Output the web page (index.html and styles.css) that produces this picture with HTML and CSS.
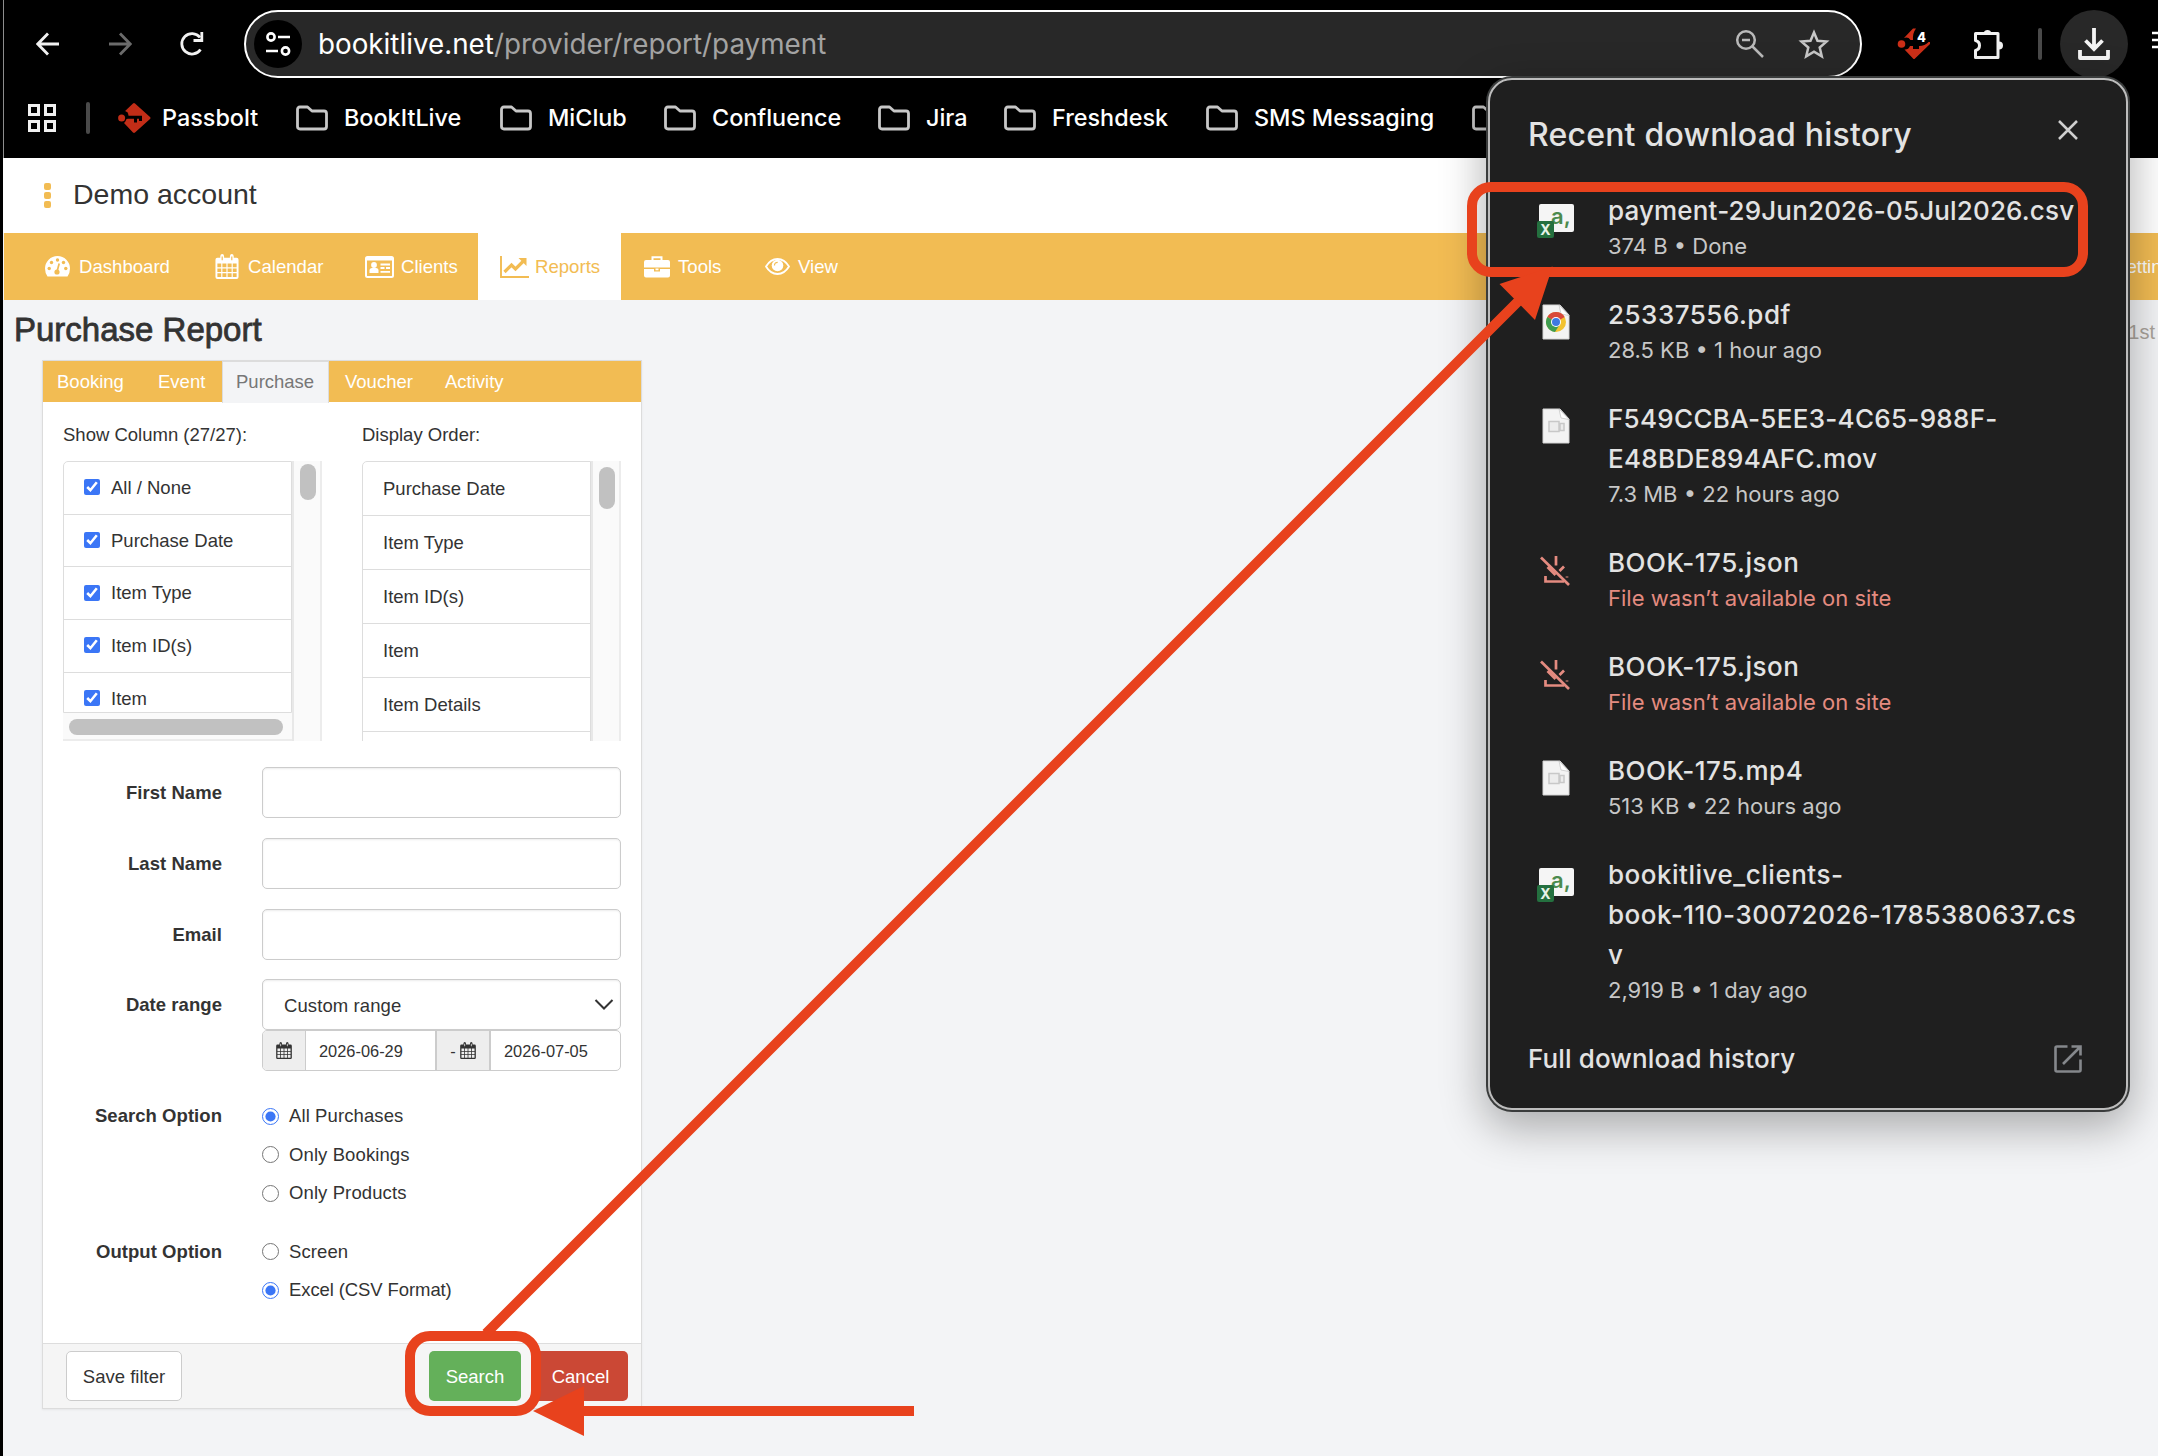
FILE: index.html
```html
<!DOCTYPE html>
<html lang="en">
<head>
<meta charset="utf-8">
<title>Purchase Report</title>
<link rel="stylesheet" href="styles.css">
</head>
<body>
<svg class="defs" width="0" height="0">
  <symbol id="folder" viewBox="0 0 32 26"><path d="M1.500 4.500Q1.500 2 4 2H11.500L16 6H28Q30.500 6 30.500 8.500V21.500Q30.500 24 28 24H4Q1.500 24 1.500 21.500Z" fill="none" stroke="#c7c7c7" stroke-width="2.800" stroke-linejoin="round"/></symbol>
  <symbol id="cal" viewBox="0 0 24 26"><path fill="currentColor" fill-rule="evenodd" d="M2 4H5V2.500Q5 0 7 0T9 2.500V4H15V2.500Q15 0 17 0T19 2.500V4H22Q24 4 24 6V24Q24 26 22 26H2Q0 26 0 24V6Q0 4 2 4ZM2 10V13.700H6V10ZM7.200 10V13.700H11.400V10ZM12.600 10V13.700H16.800V10ZM18 10V13.700H22V10ZM2 15V18.800H6V15ZM7.200 15V18.800H11.400V15ZM12.600 15V18.800H16.800V15ZM18 15V18.800H22V15ZM2 20V24H6V20ZM7.200 20V24H11.400V20ZM12.600 20V24H16.800V20ZM18 20V24H22V20ZM6.400 2.500V6.500H7.600V2.500ZM16.400 2.500V6.500H17.600V2.500Z"/></symbol>
  <symbol id="page" viewBox="0 0 28 36"><path d="M1 1H18L27 11V35H1Z" fill="#f3f3f3" stroke="#d5d5d5"/><path d="M17 1L27 11.500L19 10Z" fill="#fff" stroke="#c6c6c6" stroke-width=".8"/></symbol>
  <symbol id="movie" viewBox="0 0 28 36"><use href="#page"/><path d="M7 13.500h10v10H7zM18 15.500h4v7h-4z" fill="#ececec" stroke="#c8c8c8" stroke-width="1.500"/></symbol>
  <symbol id="nodl" viewBox="0 0 30 30"><path d="M1 1.500L29 29" stroke="#e48b80" stroke-width="2.700"/><path d="M16 0V9.500M7.500 11L15.500 19M24 10.500L19.500 15M5.500 20V25.500H24M27 20.500V21.500" fill="none" stroke="#e48b80" stroke-width="2.700"/></symbol>
</svg>

<div class="window">
  <header class="chrome">
    <div class="toolbar">
      <svg class="back" width="24" height="24" viewBox="0 0 24 24"><path d="M23 12H2M12 1.500L1.800 12L12 22.500" fill="none" stroke="#f1f1f1" stroke-width="2.800"/></svg>
      <svg class="fwd" width="24" height="24" viewBox="0 0 24 24"><path d="M1 12H22M12 1.500L22.200 12L12 22.500" fill="none" stroke="#6b6b6b" stroke-width="2.800"/></svg>
      <svg class="reload" width="26" height="26" viewBox="0 0 26 26"><path d="M21.500 18.500A10.200 10.200 0 1 1 21 6.500" fill="none" stroke="#f1f1f1" stroke-width="2.800"/><path d="M22.800 1V9.500H14.500" fill="none" stroke="#f1f1f1" stroke-width="2.800"/></svg>
      <div class="omnibox">
        <span class="site"><svg width="26" height="26" viewBox="0 0 26 26" fill="none" stroke="#fff" stroke-width="2.600"><circle cx="6" cy="6" r="3.600"/><path d="M13 6H25M1 20H13"/><circle cx="20.500" cy="20" r="3.600"/></svg></span>
        <span class="url"><b>bookitlive.net</b>/provider/report/payment</span>
        <svg class="mag" width="30" height="30" viewBox="0 0 30 30" fill="none" stroke="#b9b9b9" stroke-width="2.500"><circle cx="11" cy="11" r="8.800"/><path d="M17.500 17.500L28 28M7 11H15"/></svg>
        <svg class="star" width="32" height="31" viewBox="0 0 32 31"><path d="M16 3.500L19.500 11.800L28.500 12.600L21.700 18.500L23.800 27.300L16 22.600L8.200 27.300L10.300 18.500L3.500 12.600L12.500 11.800Z" fill="none" stroke="#c7c7c7" stroke-width="2.500"/></svg>
      </div>
      <svg class="ext" width="34" height="32" viewBox="0 0 34 32"><path d="M16 0.500H19Q15.500 5 16 12H13.500A5.500 5.500 0 0 0 7 10ZM7.500 21.500A5.500 5.500 0 0 0 13 18H16V21H22V18Q28 18 31.500 14H33V16L17.500 31H16.500Z" fill="#cc2f18"/><circle cx="4.500" cy="16" r="3.800" fill="#cc2f18"/><text x="20" y="13.500" font-family="Inter, sans-serif" font-size="13" font-weight="800" fill="#fff">4</text></svg>
      <svg class="puzzle" width="34" height="34" viewBox="0 0 34 34"><path d="M4.500 6.500H27V30.500H4.500V23.500Q8.500 22.500 8.500 18.500T4.500 13.500Z" fill="none" stroke="#f1f1f1" stroke-width="3" stroke-linejoin="round"/><path d="M12.500 6A4.200 4.200 0 0 1 20.500 6ZM28 14.500A4 4 0 0 1 28 22.500Z" fill="#f1f1f1"/></svg>
      <i class="sep"></i>
      <span class="dl"><svg width="34" height="34" viewBox="0 0 34 34" fill="none" stroke="#f4f4f4" stroke-width="3.800"><path d="M17 1V22M8.500 13.500L17 22L25.500 13.500"/><path d="M3 23V31H31V23" stroke-linejoin="round"/></svg></span>
      <svg class="more" width="10" height="20" viewBox="0 0 10 20"><path d="M0 3H10M0 10H10M0 17H10" stroke="#fff" stroke-width="2.500"/></svg>
    </div>
    <div class="bookmarks">
      <svg class="grid" width="28" height="28" viewBox="0 0 28 28" fill="none" stroke="#f1f1f1" stroke-width="3"><path d="M1.500 1.500h9v9h-9zM17.500 1.500h9v9h-9zM1.500 17.500h9v9h-9zM17.500 17.500h9v9h-9z"/></svg>
      <i class="sep"></i>
      <span class="bm pass"><svg width="33" height="30" viewBox="0 0 33 30"><path d="M15 .5Q16 -.3 17 .5L32 14Q33 15 32 16L17 29.500Q16 30.300 15 29.500L6 20A6 6 0 0 0 5 10Z" fill="#c22d17"/><circle cx="6" cy="12.500" r="4.500" fill="#000"/><circle cx="3.600" cy="15" r="3.500" fill="#c22d17"/><path d="M8 14.300H22.500V18M17.500 14V19.500" stroke="#000" stroke-width="3" fill="none"/></svg><span class="w0">Passbolt</span></span>
      <span class="bm"><svg><use href="#folder"/></svg><span class="w1">BookItLive</span></span>
      <span class="bm"><svg><use href="#folder"/></svg><span class="w2">MiClub</span></span>
      <span class="bm"><svg><use href="#folder"/></svg><span class="w3">Confluence</span></span>
      <span class="bm"><svg><use href="#folder"/></svg><span class="w4">Jira</span></span>
      <span class="bm"><svg><use href="#folder"/></svg><span class="w5">Freshdesk</span></span>
      <span class="bm"><svg><use href="#folder"/></svg><span class="w6">SMS Messaging</span></span>
      <span class="bm"><svg><use href="#folder"/></svg></span>
    </div>
  </header>

  <div class="account"><span class="dots"><i></i><i></i><i></i></span><span class="name">Demo account</span></div>

  <nav class="nav">
    <a class="n1"><svg width="25" height="21" viewBox="0 0 25 21"><path fill="#fff" d="M12.500 0A12.500 12.500 0 0 1 25 12.500Q25 17 22.500 20.500H2.500Q0 17 0 12.500A12.500 12.500 0 0 1 12.500 0Z"/><g fill="#f2bc53"><circle cx="4.200" cy="12.500" r="1.700"/><circle cx="6.500" cy="6.500" r="1.700"/><circle cx="12.500" cy="4" r="1.700"/><circle cx="18.500" cy="6.500" r="1.700"/><circle cx="20.800" cy="12.500" r="1.700"/><circle cx="12" cy="16" r="2.600"/></g><path d="M12.200 15L14.200 7.500" stroke="#f2bc53" stroke-width="1.700"/></svg>Dashboard</a>
    <a class="n2"><svg width="24" height="25"><use href="#cal"/></svg>Calendar</a>
    <a class="n3"><svg width="29" height="22" viewBox="0 0 29 22"><rect x="1" y="1" width="27" height="20" rx="1.500" fill="none" stroke="#fff" stroke-width="2"/><path d="M1 3H28" stroke="#fff" stroke-width="3"/><circle cx="9" cy="9" r="2.900" fill="#fff"/><path d="M4.500 17V14.500Q4.500 12 7 12H11Q13.500 12 13.500 14.500V17Z" fill="#fff"/><path d="M15.500 8.500H25M15.500 12H19.500M21 12H25M15.500 15.800H25" stroke="#fff" stroke-width="1.800"/></svg>Clients</a>
    <a class="n4 on"><svg width="29" height="22" viewBox="0 0 29 22"><path d="M1 0V21H29" fill="none" stroke="#f2bc53" stroke-width="1.900"/><path d="M4.500 16L11.500 9L15.500 13L23.500 5" fill="none" stroke="#f2bc53" stroke-width="3.200"/><path d="M18.500 2H26.500V10Z" fill="#f2bc53"/></svg>Reports</a>
    <a class="n5"><svg width="26" height="22" viewBox="0 0 26 22"><path d="M8.500 4V1.200H17.500V4" fill="none" stroke="#fff" stroke-width="2"/><path d="M2 4H24Q26 4 26 6V11.500H0V6Q0 4 2 4ZM0 13H10V15.500H16V13H26V19.500Q26 21.500 24 21.500H2Q0 21.500 0 19.500ZM11.500 12.500H14.500V14.300H11.500Z" fill="#fff"/></svg>Tools</a>
    <a class="n6"><svg width="25" height="17" viewBox="0 0 25 17"><path d="M1 8.500Q5.500 1 12.500 1T24 8.500Q19.500 16 12.500 16T1 8.500Z" fill="none" stroke="#fff" stroke-width="1.800"/><circle cx="12.500" cy="7.500" r="5.800" fill="#fff"/><path d="M9.500 7.500Q9.500 4.300 12.700 4.300" fill="none" stroke="#f2bc53" stroke-width="1.200"/></svg>View</a>
    <a class="settings">Settings</a>
  </nav>

  <main>
    <div class="headline"><h1>Purchase Report</h1><span class="date">1st</span></div>
    <section class="panel">
      <div class="tabs"><a class="t1">Booking</a><a class="t2">Event</a><a class="t3 on">Purchase</a><a class="t4">Voucher</a><a class="t5">Activity</a></div>
      <div class="body">
        <div class="cols">
          <div class="col">
            <div class="cap">Show Column (27/27):</div>
            <div class="scroller two">
              <div class="list checks">
                <label><input type="checkbox" checked>All / None</label>
                <label><input type="checkbox" checked>Purchase Date</label>
                <label><input type="checkbox" checked>Item Type</label>
                <label><input type="checkbox" checked>Item ID(s)</label>
                <label><input type="checkbox" checked>Item</label>
              </div>
              <div class="vtrack"><i></i></div>
              <div class="htrack"><i></i></div>
            </div>
          </div>
          <div class="col">
            <div class="cap">Display Order:</div>
            <div class="scroller">
              <div class="list order"><div>Purchase Date</div><div>Item Type</div><div>Item ID(s)</div><div>Item</div><div>Item Details</div><div></div></div>
              <div class="vtrack"><i></i></div>
            </div>
          </div>
        </div>
        <div class="row"><b>First Name</b><span class="field"></span></div>
        <div class="row"><b>Last Name</b><span class="field"></span></div>
        <div class="row"><b>Email</b><span class="field"></span></div>
        <div class="row range"><b>Date range</b>
          <div class="stack">
            <span class="field select">Custom range<svg width="20" height="11" viewBox="0 0 20 11"><path d="M1.500 1L10 9.500L18.500 1" fill="none" stroke="#333" stroke-width="2"/></svg></span>
            <div class="dates"><span class="add a1"><svg width="16" height="17"><use href="#cal"/></svg></span><span class="d1">2026-06-29</span><span class="add a2">-<svg width="16" height="17"><use href="#cal"/></svg></span><span class="d2">2026-07-05</span></div>
          </div>
        </div>
        <div class="opts"><b>Search Option</b><div><label><input type="radio" name="s" checked>All Purchases</label><label><input type="radio" name="s">Only Bookings</label><label><input type="radio" name="s">Only Products</label></div></div>
        <div class="opts second"><b>Output Option</b><div><label><input type="radio" name="o">Screen</label><label class="fmt"><input type="radio" name="o" checked>Excel (CSV Format)</label></div></div>
      </div>
      <footer><button class="save">Save filter</button><button class="search">Search</button><button class="cancel">Cancel</button></footer>
    </section>
  </main>
</div>

<aside class="popup">
  <div class="phead"><h2>Recent download history</h2><svg width="20" height="20" viewBox="0 0 20 20"><path d="M1 1L19 19M19 1L1 19" stroke="#cfcfcf" stroke-width="2.500"/></svg></div>
  <div class="item"><span class="csv"><i class="sheet">a,</i><i class="xl">X</i></span><div><p class="s1">payment-29Jun2026-05Jul2026.csv</p><small>374 B • Done</small></div></div>
  <div class="item"><svg class="p" viewBox="0 0 28 36"><use href="#page"/><circle cx="14" cy="18" r="10" fill="#f2c230"/><path d="M14 18L5.300 13A10 10 0 0 1 22.700 13Z" fill="#d9493a"/><path d="M14 18L5.300 13A10 10 0 0 0 13 28L18 20Z" fill="#3f9c50"/><circle cx="14" cy="18" r="5" fill="#fff"/><circle cx="14" cy="18" r="4" fill="#3f78e0"/></svg><div><p>25337556.pdf</p><small>28.5 KB • 1 hour ago</small></div></div>
  <div class="item"><svg class="p"><use href="#movie"/></svg><div><p class="s2">F549CCBA-5EE3-4C65-988F-<br>E48BDE894AFC.mov</p><small>7.3 MB • 22 hours ago</small></div></div>
  <div class="item"><svg class="x"><use href="#nodl"/></svg><div><p>BOOK-175.json</p><small class="err">File wasn’t available on site</small></div></div>
  <div class="item"><svg class="x"><use href="#nodl"/></svg><div><p>BOOK-175.json</p><small class="err">File wasn’t available on site</small></div></div>
  <div class="item"><svg class="p"><use href="#movie"/></svg><div><p>BOOK-175.mp4</p><small>513 KB • 22 hours ago</small></div></div>
  <div class="item"><span class="csv"><i class="sheet">a,</i><i class="xl">X</i></span><div><p>bookitlive_clients-<br>book-110-30072026-1785380637.cs<br>v</p><small>2,919 B • 1 day ago</small></div></div>
  <div class="pfoot"><span>Full download history</span><svg width="28" height="28" viewBox="0 0 28 28" fill="none" stroke="#85888c" stroke-width="2.600"><path d="M13.500 1.500H3Q1.500 1.500 1.500 3V25Q1.500 26.500 3 26.500H25Q26.500 26.500 26.500 25V14.500M17.500 1.500H26.500V10.500M26 2L9 19"/></svg></div>
</aside>

<svg class="marks" width="2158" height="1456" viewBox="0 0 2158 1456">
  <g fill="none" stroke="#e8421d" stroke-width="10">
    <rect x="1472" y="187" width="611" height="85" rx="19"/>
    <rect x="410" y="1336" width="126" height="75" rx="20"/>
    <path d="M486 1333.500L1520 299.500M580 1411H914"/>
  </g>
  <path d="M1499.500 284L1535 320L1552.600 266.500ZM584 1386V1436L533 1411Z" fill="#e8421d"/>
</svg>
</body>
</html>
```
FILE: styles.css
```css
* { box-sizing: border-box; }
body { margin: 0; width: 2158px; height: 1456px; overflow: hidden; position: relative; background: #f3f4f6; font-family: "Liberation Sans", Arial, sans-serif; font-size: 18.5px; color: #333; }
svg { display: block; flex: none; }
i { display: block; flex: none; font-style: normal; }
.defs { position: absolute; }
.window { height: 1456px; border-left: 3px solid #000; display: flex; flex-direction: column; overflow: hidden; }

.chrome { height: 158px; background: #000; border-left: 1px solid #8d8d8d; font-family: Inter, sans-serif; flex: none; }
.toolbar { height: 88px; display: flex; align-items: center; padding-left: 32px; }
.fwd { margin-left: 48px; }
.reload { margin-left: 47px; }
.omnibox { width: 1618px; height: 68px; margin-left: 39px; border: 2px solid #fff; border-radius: 34px; background: #282828; display: flex; align-items: center; padding-left: 8px; flex: none; }
.site { width: 48px; height: 48px; border-radius: 50%; background: #000; display: grid; place-items: center; }
.url { margin-left: 16px; font-size: 27.8px; color: #a3a3a3; width: 1417px; white-space: nowrap; }
.url b { font-weight: 400; color: #fff; }
.star { margin-left: 33px; }
.ext { margin-left: 35px; }
.puzzle { margin-left: 40px; }
.sep { width: 4px; height: 32px; border-radius: 2px; background: #4a4a4a; }
.toolbar .sep { margin-left: 33px; }
.dl { width: 68px; height: 68px; margin-left: 18px; border-radius: 50%; background: #282828; display: grid; place-items: center; flex: none; }
.more { margin-left: 24px; margin-top: -8px; }
.bookmarks { height: 60px; display: flex; align-items: center; padding-left: 24px; font-size: 23.4px; font-weight: 500; color: #fff; white-space: nowrap; }
.bookmarks .sep { margin-left: 30px; margin-right: 28px; }
.bm { display: flex; align-items: center; gap: 16px; margin-right: 38px; flex: none; }
.bm svg { width: 32px; height: 26px; }
.bm.pass svg { width: 33px; height: 30px; }
.bm.pass { gap: 11px; }
.bm span { position: relative; top: -1px; }
.w0 { width: 96px; } .w1 { width: 118px; } .w2 { width: 78px; } .w3 { width: 128px; } .w4 { width: 40px; } .w5 { width: 116px; } .w6 { width: 180px; }

.account { height: 75px; flex: none; background: #fff; display: flex; align-items: center; padding-left: 41px; font-size: 28.5px; }
.name { padding-bottom: 2px; }
.dots { display: grid; gap: 2px; margin-right: 22px; }
.dots i { width: 7px; height: 7px; border-radius: 2px; background: #f2bc53; }

.nav { height: 67px; flex: none; background: #f2bc53; display: flex; color: #fff; font-size: 18.6px; margin-left: 1px; }
.nav a { display: flex; align-items: center; gap: 9px; flex: none; height: 67px; }
.n1 { width: 170px; margin-left: 41px; } .n2 { width: 150px; } .n3 { width: 113px; }
.nav .n3 { gap: 7px; }
.nav .on { width: 143px; background: #fff; color: #f2bc53; padding-left: 22px; gap: 6px; }
.n5 { width: 121px; margin-left: 23px; }
.n6 { width: 80px; }
.nav .n5, .nav .n6 { gap: 8px; }
.nav .settings { margin-left: 1269px; }

main { flex: 1; }
.headline { height: 60px; display: flex; justify-content: space-between; padding: 12px 3px 0 11px; }
h1 { margin: 0; font-size: 33px; line-height: 36px; font-weight: 400; -webkit-text-stroke: .8px #333; }
.date { font-size: 20px; color: #a9a39b; margin-top: 9px; }
.panel { width: 600px; margin-left: 39px; background: #fff; border: 1px solid #dcdcdc; box-shadow: 0 1px 2px rgba(0,0,0,.06); }
.tabs { height: 41px; background: #f2bc53; display: flex; color: #fff; line-height: 42px; }
.tabs a { flex: none; }
.t1 { width: 101px; padding-left: 14px; } .t2 { width: 78px; padding-left: 14px; }
.tabs .on { width: 107px; height: 42px; padding-left: 13px; background: #f3f4f6; border: 1px solid #dcdcdc; border-bottom: 0; color: #777; line-height: 40px; }
.t4 { width: 116px; padding-left: 16px; }
.body { height: 941px; padding: 16px 20px 0; }
.cols { display: grid; grid-template-columns: 259px 259px; column-gap: 40px; height: 324px; }
.cap { height: 43px; line-height: 34px; }
.scroller { height: 280px; display: grid; grid-template-columns: 229px 30px; overflow: hidden; }
.list { border: 1px solid #ddd; border-radius: 5px 0 0 0; height: 252px; overflow: hidden; }
.list label, .order div { display: flex; align-items: center; height: 52.700px; padding-left: 20px; border-bottom: 1px solid #ddd; }
.order { height: 282px; }
.order div { height: 54px; }
.list input { width: 16px; height: 16px; margin: 0 11px 1px 0; accent-color: #3b76f6; }
.vtrack { background: #fafafa; border-left: 2px solid #e8e8e8; border-right: 2px solid #ececec; padding: 3px 0 0 6px; }
.vtrack i { width: 16px; height: 36px; border-radius: 8px; background: #c1c1c1; }
.col:last-child .vtrack i { height: 42px; margin-top: 3px; }
.two { grid-template-rows: 252px 28px; }
.two .vtrack { grid-row: 1 / 3; grid-column: 2; }
.htrack { grid-column: 1; grid-row: 2; background: #fafafa; border-bottom: 2px solid #ececec; padding: 6px; }
.htrack i { width: 214px; height: 16px; border-radius: 8px; background: #c1c1c1; }
.row, .opts { display: flex; }
.row { height: 51px; margin-bottom: 20px; align-items: center; }
.cols + .row { margin-top: 25px; }
.row b, .opts b { width: 159px; text-align: right; margin-right: 40px; flex: none; letter-spacing: .05px; }
.field { width: 359px; height: 51px; border: 1px solid #ccc; border-radius: 5px; background: #fff; box-shadow: inset 0 1px 2px rgba(0,0,0,.08); display: flex; align-items: center; flex: none; }
.row.range { height: 92px; align-items: flex-start; margin: -1px 0 0; }
.range b { line-height: 51px; }
.select { justify-content: space-between; padding: 3px 6px 0 21px; letter-spacing: .1px; }
.select svg { margin-bottom: 3px; }
.dates { display: flex; width: 359px; height: 41px; border: 1px solid #ccc; border-radius: 5px; font-size: 16.4px; line-height: 40px; overflow: hidden; }
.add { background: #eee; display: flex; align-items: center; justify-content: center; gap: 4px; }
.a1 { width: 43px; border-right: 1px solid #ccc; }
.a2 { width: 56px; border: 2px solid #ccc; border-width: 0 2px; }
.d1 { width: 129px; padding-left: 13px; } .d2 { padding-left: 13px; }
.opts { margin-top: 26px; }
.opts b, .opts label { line-height: 38.500px; height: 38.500px; }
.opts label { display: flex; align-items: center; letter-spacing: .1px; }
.opts .fmt { letter-spacing: -.1px; }
.opts input { width: 17px; height: 17px; margin: 0 10px 0 0; accent-color: #3b76f6; }
.opts.second { margin-top: 20px; }
footer { height: 65px; background: #f5f5f5; border-top: 1px solid #ddd; display: flex; align-items: flex-start; padding: 7px 13px 0 23px; }
button { height: 50px; border-radius: 5px; border: 1px solid #ccc; background: #fff; font: 18.5px "Liberation Sans", Arial, sans-serif; color: #333; padding: 2px 0 0; }
.save { width: 116px; }
.search { width: 92px; margin-left: auto; background: #64b05a; border: 0; color: #fff; }
.cancel { width: 95px; margin-left: 12px; background: #cb4835; border: 0; color: #fff; }

.popup { position: absolute; left: 1488px; top: 78px; width: 640px; height: 1032px; border: 2px solid #bdbdbd; border-radius: 24px; background: #1f1f1f; box-shadow: 0 0 0 2px #3a3c3c, 0 14px 44px 4px rgba(0,0,0,.3); font-family: Inter, sans-serif; color: #e3e3e3; }
.phead { height: 94px; padding: 0 48px 0 38px; display: flex; justify-content: space-between; align-items: flex-start; }
.phead svg { margin-top: 40px; }
h2 { margin: 34px 0 0; font-size: 32px; line-height: 42px; font-weight: 500; white-space: nowrap; letter-spacing: .2px; }
.item { display: grid; grid-template-columns: 71px 1fr; padding: 17px 0 17px 47px; white-space: nowrap; }
.item p { margin: 0; font-size: 26px; line-height: 40px; font-weight: 500; letter-spacing: .5px; }
.item .s1 { letter-spacing: .16px; }
.item .s2 { letter-spacing: .3px; }
.item small { display: block; font-size: 22px; line-height: 30px; color: #c7c7c7; }
.item .err { color: #e48b80; }
.csv { display: grid; grid-template: 34px / 38px; margin: 13px 0 0; width: 38px; height: 36px; }
.csv i { grid-area: 1 / 1; }
.sheet { width: 35px; height: 28px; margin-left: 2px; border-radius: 2px; background: #f5f5f5; color: #4c8a4d; font: 600 22px/25px Inter, sans-serif; padding-left: 12px; }
.xl { width: 17px; height: 17px; align-self: end; border-radius: 2px; background: #24703f; color: #e8f3ea; font: 700 14px/17px Inter, sans-serif; text-align: center; }
.p { width: 28px; height: 36px; margin: 9px 0 0 5px; }
.x { width: 30px; height: 30px; margin: 13px 0 0 3px; }
.pfoot { padding: 19px 44px 0 38px; display: flex; justify-content: space-between; align-items: center; font-size: 26px; line-height: 36px; font-weight: 500; letter-spacing: .12px; }
.marks { position: absolute; left: 0; top: 0; }
```
